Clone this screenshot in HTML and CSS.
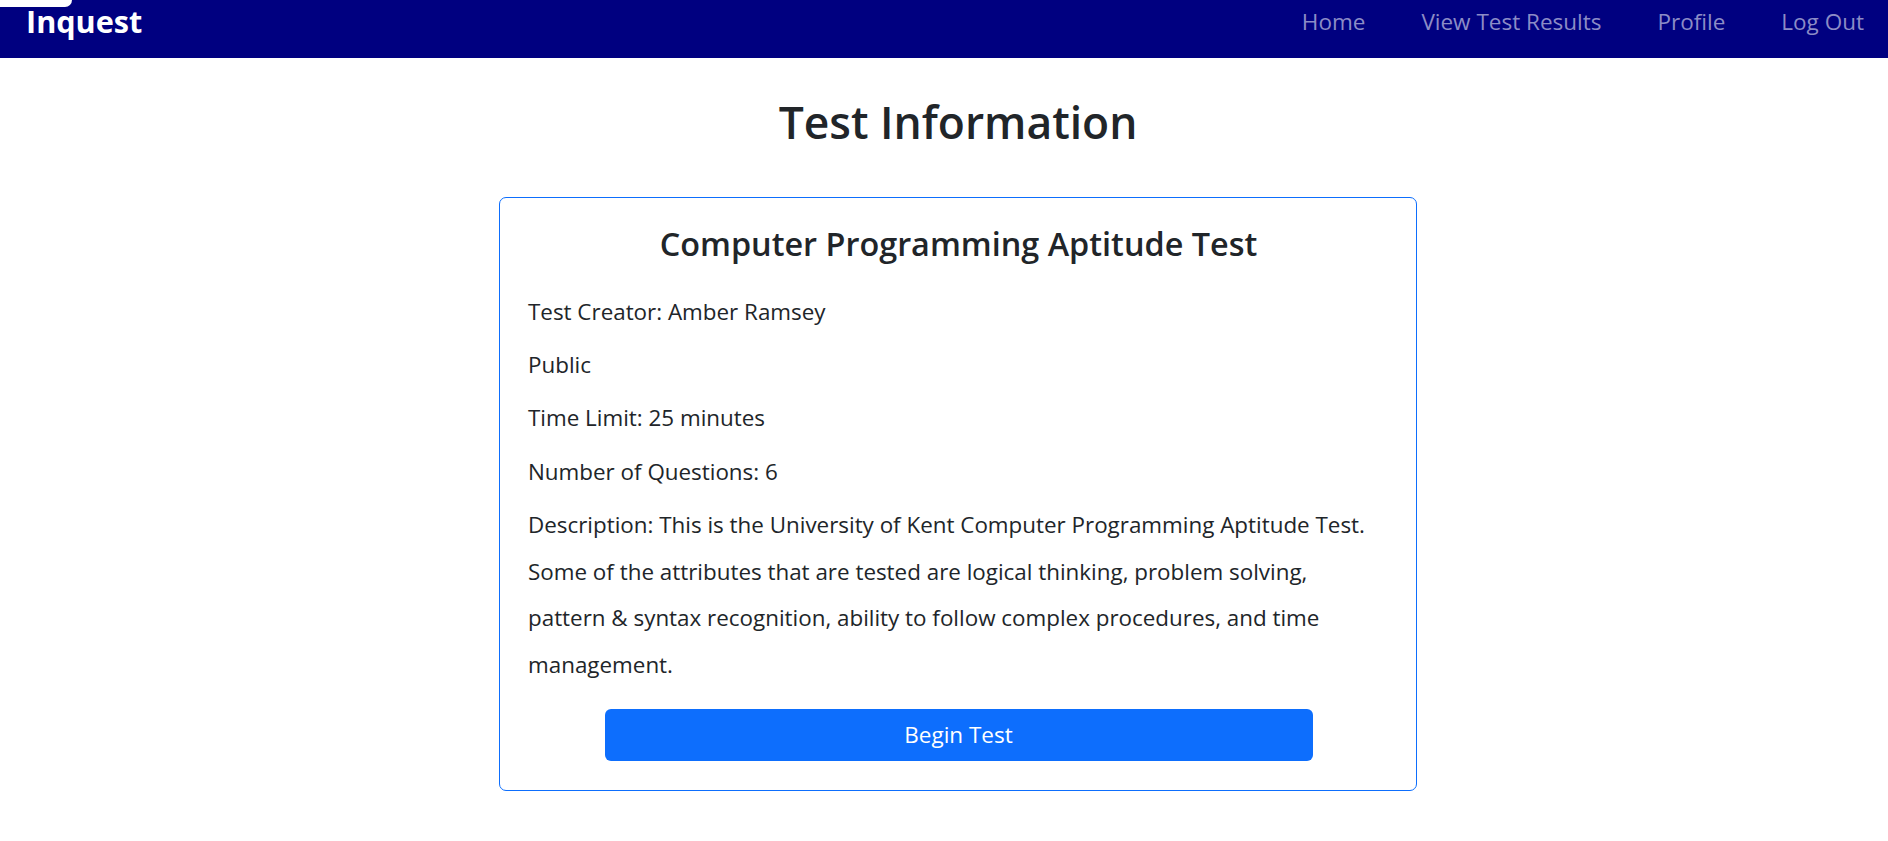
FILE: index.html
```html
<!DOCTYPE html>
<html lang="en">
<head>
<meta charset="utf-8">
<title>Inquest - Test Information</title>
<link rel="stylesheet" href="styles.css">
</head>
<body>
<div class="corner-tab"></div>
<nav class="navbar">
  <a class="brand" href="#">Inquest</a>
  <ul class="nav-links">
    <li><a href="#">Home</a></li>
    <li><a href="#">View Test Results</a></li>
    <li><a href="#">Profile</a></li>
    <li><a href="#">Log Out</a></li>
  </ul>
</nav>
<main class="page">
  <h1 class="page-title">Test Information</h1>
  <section class="card">
    <h2 class="card-title">Computer Programming Aptitude Test</h2>
    <p>Test Creator: Amber Ramsey</p>
    <p>Public</p>
    <p>Time Limit: 25 minutes</p>
    <p>Number of Questions: 6</p>
    <p>Description: This is the University of Kent Computer Programming Aptitude Test. Some of the attributes that are tested are logical thinking, problem solving, pattern &amp; syntax recognition, ability to follow complex procedures, and time management.</p>
    <div class="actions">
      <button class="btn-primary" type="button">Begin Test</button>
    </div>
  </section>
</main>
</body>
</html>
```
FILE: styles.css
```css
* { box-sizing: border-box; }
html, body { margin: 0; padding: 0; }
body {
  font-family: "Open Sans", "Noto Sans", sans-serif;
  color: #212529;
  background: #ffffff;
}
.corner-tab {
  position: absolute;
  left: 0;
  top: 0;
  width: 72px;
  height: 7px;
  background: #ffffff;
  border-bottom-right-radius: 7px;
  z-index: 2;
}
.navbar {
  height: 58px;
  background: #000080;
  display: flex;
  justify-content: space-between;
  align-items: flex-start;
  padding: 0 24px 0 26px;
}
.brand {
  margin-top: 6px;
  font-size: 30.6px;
  line-height: 30.6px;
  font-weight: 700;
  color: #ffffff;
  text-decoration: none;
}
.nav-links {
  list-style: none;
  margin: 11px 0 0 0;
  padding: 0;
  display: flex;
  gap: 56px;
}
.nav-links a {
  display: block;
  font-size: 22.5px;
  line-height: 22.5px;
  color: #8c8cc6;
  text-decoration: none;
}
.page {
  display: flex;
  flex-direction: column;
  align-items: center;
  padding-left: 28px;
}
.page-title {
  margin: 37px 0 47px;
  font-size: 44.4px;
  line-height: 55px;
  font-weight: 600;
}
.card {
  width: 918px;
  border: 1px solid #0d6efd;
  border-radius: 7px;
  padding: 26.6px 27px 28.5px 28px;
}
.card-title {
  margin: 0 0 27px;
  text-align: center;
  font-size: 32.4px;
  line-height: 37px;
  font-weight: 600;
}
.card p {
  margin: 0 0 6.67px;
  font-size: 22.4px;
  line-height: 46.67px;
}
.actions {
  display: flex;
  justify-content: center;
  margin-top: 20.5px;
}
.btn-primary {
  width: 708px;
  height: 52px;
  border: none;
  border-radius: 6px;
  background: #0d6efd;
  color: #ffffff;
  font-family: "Open Sans", "Noto Sans", sans-serif;
  font-size: 22.5px;
  line-height: 1;
  padding: 0;
}
```
